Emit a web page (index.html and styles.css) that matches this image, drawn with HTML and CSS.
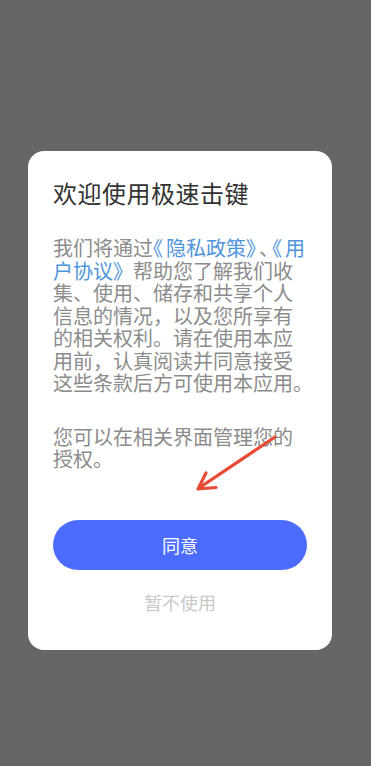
FILE: index.html
```html
<!DOCTYPE html>
<html lang="zh-CN">
<head>
<meta charset="utf-8">
<title>欢迎使用极速击键</title>
<link rel="stylesheet" href="styles.css">
</head>
<body>
<div class="dialog">
  <div class="title">欢迎使用极速击键</div>
  <div class="text">
    <span class="line">我们将通过<span class="link"><span class="pn">《</span>隐私政策<span class="pn">》</span></span><span class="pn">、</span><span class="link"><span class="pn">《</span>用</span></span>
    <span class="line"><span class="link">户协议》</span>帮助您了解我们收</span>
    <span class="line">集、使用、储存和共享个人</span>
    <span class="line">信息的情况，以及您所享有</span>
    <span class="line">的相关权利。请在使用本应</span>
    <span class="line">用前，认真阅读并同意接受</span>
    <span class="line">这些条款后方可使用本应用。</span>
  </div>
  <div class="text para2">
    <span class="line">您可以在相关界面管理您的</span>
    <span class="line">授权。</span>
  </div>
  <div class="btn">同意</div>
  <div class="skip">暂不使用</div>
</div>
<svg class="arrow" width="95" height="65" viewBox="0 0 95 65">
  <line x1="85" y1="7" x2="9" y2="58" stroke="#e84a33" stroke-width="3.2" stroke-linecap="round"/>
  <polyline points="16,43 8,59 26,57.5" fill="none" stroke="#e84a33" stroke-width="3.2" stroke-linecap="round" stroke-linejoin="round"/>
</svg>
</body>
</html>
```

FILE: styles.css
```css
html, body {
  margin: 0;
  padding: 0;
}
body {
  background: #666666;
  font-family: "Noto Sans CJK SC", "Noto Sans", sans-serif;
  width: 371px;
  height: 766px;
  overflow: hidden;
  position: relative;
}
.dialog {
  margin: 151px 0 0 28px;
  width: 304px;
  box-sizing: border-box;
  background: #ffffff;
  border-radius: 16px;
  padding: 26px 25px 36px;
}
.title {
  font-size: 24px;
  line-height: 32px;
  color: #333333;
  letter-spacing: 0.5px;
  white-space: nowrap;
}
.text {
  margin-top: 28px;
  font-size: 20px;
  line-height: 22.5px;
  color: #8c8c8c;
  text-spacing-trim: space-all;
}
.text.para2 {
  margin-top: 31px;
}
.line {
  display: block;
  white-space: nowrap;
}
.link {
  color: #4f94dc;
}
.pn {
  font-feature-settings: "halt";
  letter-spacing: 3px;
}
.btn {
  margin-top: 49px;
  height: 50px;
  border-radius: 25px;
  background: #4b6cff;
  color: #ffffff;
  font-size: 18px;
  display: flex;
  align-items: center;
  justify-content: center;
}
.skip {
  margin-top: 20px;
  font-size: 18px;
  line-height: 24px;
  text-align: center;
  color: #c8c8c8;
}
.arrow {
  position: absolute;
  left: 190px;
  top: 430px;
}
```
